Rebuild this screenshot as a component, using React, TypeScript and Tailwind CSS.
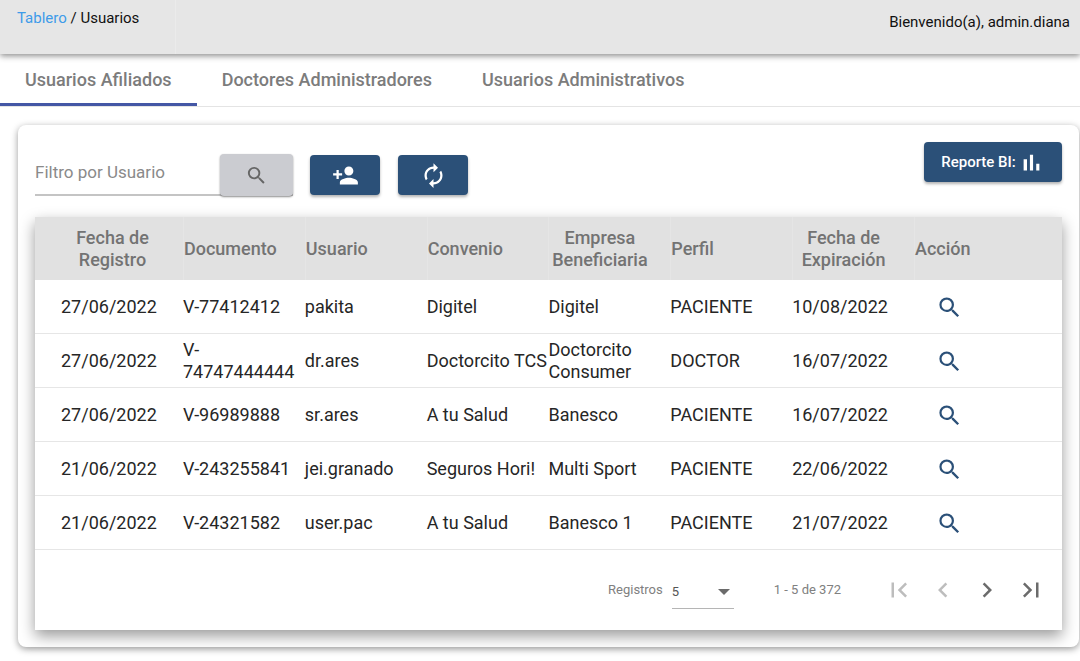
import { useState } from "react";
import {
  MdAutorenew,
  MdChevronLeft,
  MdChevronRight,
  MdFirstPage,
  MdLastPage,
  MdPersonAdd,
  MdSearch,
} from "react-icons/md";

const tabs = ["Usuarios Afiliados", "Doctores Administradores", "Usuarios Administrativos"];

const columns = [
  "Fecha de Registro",
  "Documento",
  "Usuario",
  "Convenio",
  "Empresa Beneficiaria",
  "Perfil",
  "Fecha de Expiración",
];

const rows = [
  ["27/06/2022", "V-77412412", "pakita", "Digitel", "Digitel", "PACIENTE", "10/08/2022"],
  ["27/06/2022", "V-74747444444", "dr.ares", "Doctorcito TCS", "Doctorcito Consumer", "DOCTOR", "16/07/2022"],
  ["27/06/2022", "V-96989888", "sr.ares", "A tu Salud", "Banesco", "PACIENTE", "16/07/2022"],
  ["21/06/2022", "V-243255841", "jei.granado", "Seguros Hori!", "Multi Sport", "PACIENTE", "22/06/2022"],
  ["21/06/2022", "V-24321582", "user.pac", "A tu Salud", "Banesco 1", "PACIENTE", "21/07/2022"],
];

const actionButton =
  "flex h-10 items-center justify-center rounded bg-[#2b5078] text-white shadow-[0_2px_3px_rgba(0,0,0,0.3)]";

function BarsIcon() {
  return (
    <svg viewBox="0 0 24 24" width="27" height="27" fill="currentColor" aria-hidden="true">
      <path d="M5 9.2h3V19H5zM10.6 5h2.8v14h-2.8zM16.2 13H19v6h-2.8z" />
    </svg>
  );
}

function TopBar() {
  return (
    <header className="relative flex h-[54px] items-start justify-between bg-[#e6e6e6] text-[15px] leading-5 text-[#111] shadow-[0_2px_6px_rgba(0,0,0,0.45)]">
      <nav aria-label="Ruta" className="h-full w-44 border-r border-[#ebebeb] pt-2 pl-[17px]">
        <a href="#tablero" className="text-[#3d9be9]">Tablero</a> / Usuarios
      </nav>
      <p className="pt-3 pr-[10px]">Bienvenido(a), admin.diana</p>
    </header>
  );
}

function Tabs() {
  const [active, setActive] = useState(0);
  return (
    <div role="tablist" className="flex h-[53px] border-b border-[#e4e4e4]">
      {tabs.map((tab, i) => (
        <button
          key={tab}
          role="tab"
          aria-selected={i === active}
          onClick={() => setActive(i)}
          className={
            "border-b-[3px] px-[25px] pt-0.5 text-lg leading-6 font-medium text-[#7c7c7c] " +
            (i === active ? "border-[#4457a5]" : "border-transparent")
          }
        >
          {tab}
        </button>
      ))}
    </div>
  );
}

function Toolbar() {
  return (
    <div className="flex items-start justify-between">
      <div className="flex items-start pt-3">
        <div className="flex h-[42px] w-[258px] items-stretch border-b-2 border-[#c4c4c4]">
          <input
            aria-label="Filtro por Usuario"
            placeholder="Filtro por Usuario"
            className="h-9 min-w-0 flex-1 bg-transparent text-[17px] outline-none placeholder:text-[#8a8a8a]"
          />
          <button
            aria-label="Buscar"
            className="flex h-[42px] w-[73px] items-center justify-center rounded bg-[#cbccd1] text-[#666] shadow-[0_1px_2px_rgba(0,0,0,0.45)]"
          >
            <MdSearch size={23} />
          </button>
        </div>
        <button aria-label="Agregar usuario" className={actionButton + " mt-px ml-[17px] w-[70px]"}>
          <MdPersonAdd size={27} />
        </button>
        <button aria-label="Actualizar" className={actionButton + " mt-px ml-[18px] w-[70px]"}>
          <MdAutorenew size={27} />
        </button>
      </div>
      <button className={actionButton + " w-[138px] gap-0.5 text-[15px] font-medium"}>
        Reporte BI:
        <BarsIcon />
      </button>
    </div>
  );
}

function UsersTable() {
  return (
    <table className="w-full table-fixed border-separate border-spacing-0 text-left text-lg leading-[22px]">
      <thead>
        <tr className="h-[63px] bg-[#e1e1e1] text-[#737373]">
          {columns.map((c) => (
            <th
              key={c}
              scope="col"
              className="border-l border-[#e5e5e5] p-0 font-medium first:w-[148px] first:border-l-0 first:pl-[27px]"
            >
              <button className="pr-5 text-center font-medium">{c}</button>
            </th>
          ))}
          <th scope="col" className="w-[148px] border-l border-[#e5e5e5] p-0 font-medium">
            Acción
          </th>
        </tr>
      </thead>
      <tbody className="text-[#262626]">
        {rows.map((row) => (
          <tr key={row[1]} className="h-[54px]">
            {row.map((cell, i) => (
              <td key={i} className="border-b border-[#e6e6e6] p-0 first:pl-[26px]">
                {cell}
              </td>
            ))}
            <td className="border-b border-[#e6e6e6] p-0 pt-0.5 pl-[22px]">
              <button aria-label={"Ver " + row[2]} className="block text-[#2b5078]">
                <MdSearch size={27} />
              </button>
            </td>
          </tr>
        ))}
      </tbody>
    </table>
  );
}

function Paginator() {
  const pageButton = "flex h-11 w-11 items-center justify-center text-[#6b6b6b] disabled:text-[#bdbdbd]";
  return (
    <div className="flex h-20 items-center justify-end pr-[9px] text-[13px] text-[#808080]">
      <label htmlFor="page-size">Registros</label>
      <div className="relative ml-[9px] mt-2 border-b border-[#b5b5b5] pb-1">
        <select
          id="page-size"
          defaultValue="5"
          className="h-6 w-[62px] appearance-none bg-transparent text-[#555] outline-none"
        >
          <option>5</option>
          <option>10</option>
          <option>25</option>
        </select>
        <svg
          viewBox="0 0 12 6"
          width="12"
          height="6"
          className="pointer-events-none absolute top-[9px] right-1 text-[#6b6b6b]"
          aria-hidden="true"
        >
          <path d="M0 0h12L6 6z" fill="currentColor" />
        </svg>
      </div>
      <span className="mr-9 ml-10">1 - 5 de 372</span>
      <button aria-label="Primera página" disabled className={pageButton}>
        <MdFirstPage size={30} />
      </button>
      <button aria-label="Página anterior" disabled className={pageButton}>
        <MdChevronLeft size={30} />
      </button>
      <button aria-label="Página siguiente" className={pageButton}>
        <MdChevronRight size={30} />
      </button>
      <button aria-label="Última página" className={pageButton}>
        <MdLastPage size={30} />
      </button>
    </div>
  );
}

export default function App() {
  return (
    <div className="min-h-screen bg-white font-[Roboto,sans-serif]">
      <TopBar />
      <Tabs />
      <main className="mt-[18px] mr-px mb-3 ml-[18px] rounded-lg bg-white px-[17px] pt-[17px] pb-[17px] shadow-[0_2px_7px_rgba(0,0,0,0.4)]">
        <Toolbar />
        <section className="mt-[21px] bg-white shadow-[0_6px_14px_rgba(0,0,0,0.4)]">
          <UsersTable />
          <Paginator />
        </section>
      </main>
    </div>
  );
}
